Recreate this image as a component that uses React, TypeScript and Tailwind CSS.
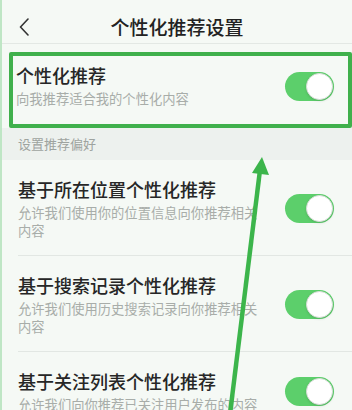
const items = [
  { title: "基于所在位置个性化推荐", desc: "允许我们使用你的位置信息向你推荐相关内容" },
  { title: "基于搜索记录个性化推荐", desc: "允许我们使用历史搜索记录向你推荐相关内容" },
  { title: "基于关注列表个性化推荐", desc: "允许我们向你推荐已关注用户发布的内容" },
];

function Toggle() {
  return (
    <div className="flex h-[29px] w-[49px] shrink-0 items-center justify-end rounded-full bg-[#5ccf6b] pr-[1px]">
      <div className="h-[27px] w-[27px] rounded-full border border-[#d9ddd9] bg-white shadow-sm" />
    </div>
  );
}

export default function App() {
  return (
    <div
      className="relative h-[410px] w-[352px] overflow-hidden border-l-2 border-[#bfe6c5] bg-[#f5f9f5]"
      style={{ fontFamily: '"Noto Sans CJK SC", "Noto Sans", sans-serif' }}
    >
      <header className="flex h-[44px] items-center border-b border-[#e3e8e4] pt-[10px]">
        <div className="flex w-[40px] justify-center pl-[4px]">
          <svg width="11" height="18" viewBox="0 0 11 18" fill="none" stroke="#333" strokeWidth="1.6" strokeLinecap="round" strokeLinejoin="round">
            <path d="M9 1 1.5 9 9 17" />
          </svg>
        </div>
        <div className="flex-1 text-center text-[19px] font-medium leading-[26px] text-[#222]">个性化推荐设置</div>
        <div className="w-[40px]" />
      </header>

      <div className="mt-[8px] ml-[7px] flex items-start rounded-[2px] border-4 border-[#40b04c] pr-[14px] pl-[3px]">
        <div className="flex-1 pt-[7px] pb-[16px]">
          <div className="text-[18px] font-medium leading-[24px] text-[#262626]">个性化推荐</div>
          <div className="mt-[2px] text-[13.3px] leading-[19px] text-[#a8ada9]">向我推荐适合我的个性化内容</div>
        </div>
        <div className="mt-[16px]">
          <Toggle />
        </div>
      </div>

      <div className="flex h-[32px] items-center bg-[#edf1ee] pl-[16px] text-[13px] text-[#9ea39f]">设置推荐偏好</div>

      <div className="pl-[16px]">
        {items.map((item) => (
          <div key={item.title} className="flex items-center gap-[24px] border-b border-[#e2e7e3] pt-[17px] pr-[18px] pb-[15px]">
            <div className="w-[245px]">
              <div className="text-[18px] font-medium leading-[24px] text-[#262626]">{item.title}</div>
              <div className="mt-[3px] text-[13.3px] leading-[18px] text-[#a8ada9]">{item.desc}</div>
            </div>
            <Toggle />
          </div>
        ))}
      </div>

      <svg className="pointer-events-none absolute inset-0" width="352" height="410" viewBox="0 0 352 410">
        <line x1="228" y1="414" x2="258" y2="170" stroke="#3cb54b" strokeWidth="4.5" />
        <polygon points="260,157 250,173 267,175" fill="#3cb54b" />
      </svg>
    </div>
  );
}
